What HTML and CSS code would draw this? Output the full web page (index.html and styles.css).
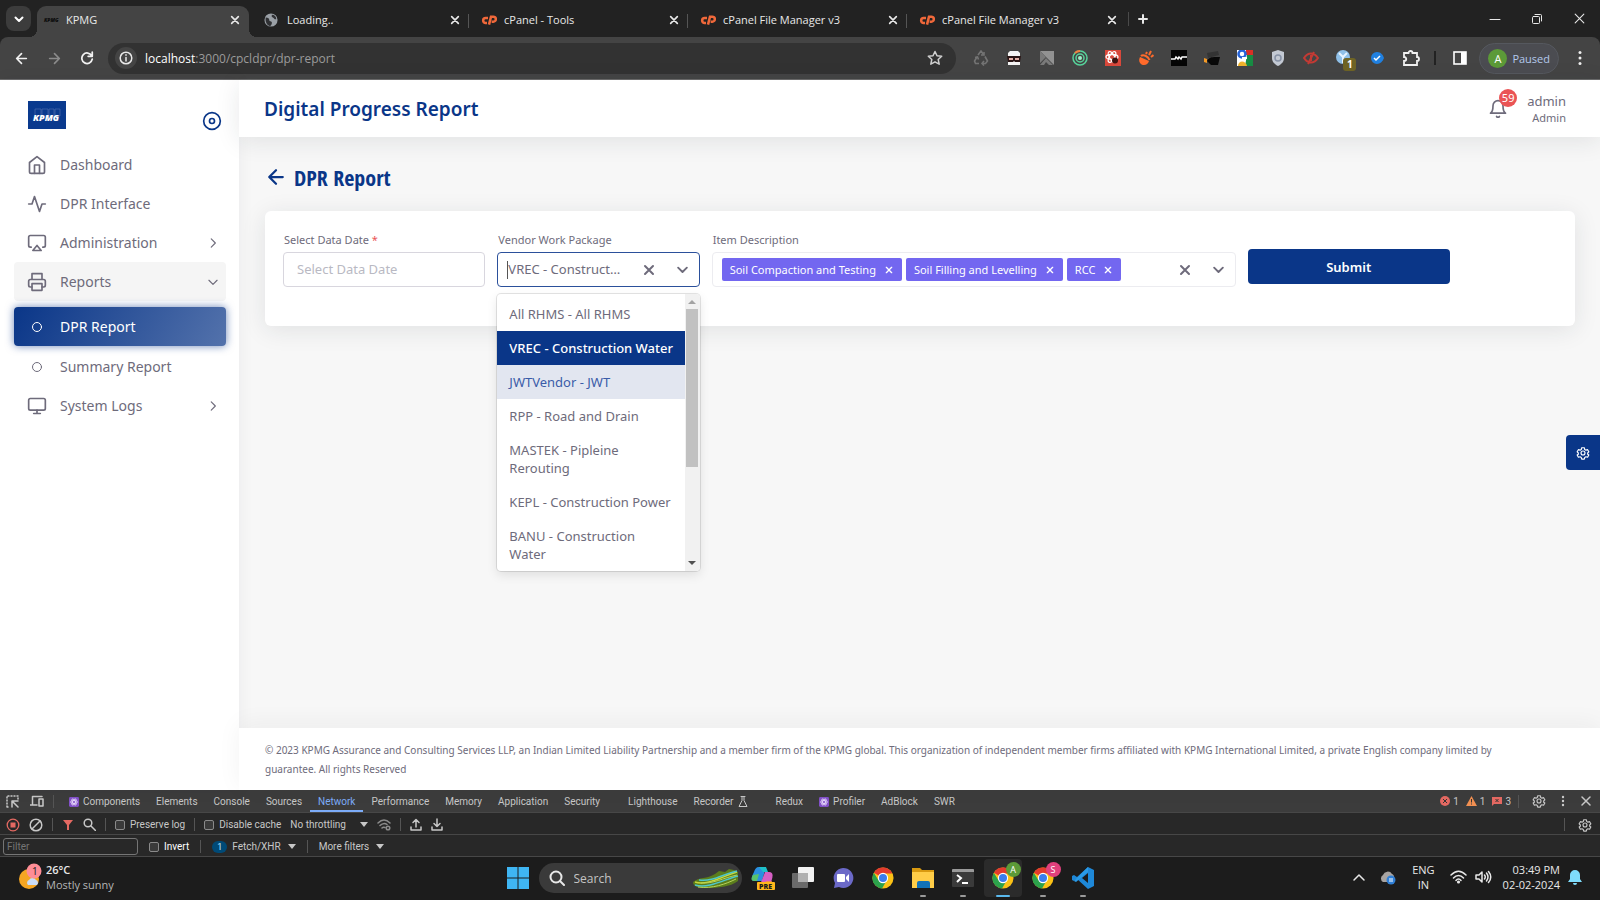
FILE: index.html
```html
<!DOCTYPE html>
<html lang="en">
<head>
<meta charset="utf-8">
<title>KPMG</title>
<link rel="stylesheet" href="styles.css">
</head>
<body>
<svg class="sprite" aria-hidden="true">
  <symbol id="close" viewBox="0 0 12 12"><path d="M2 2l8 8M10 2l-8 8"/></symbol>
  <symbol id="chev-down" viewBox="0 0 24 24"><path d="M5 9l7 7 7-7"/></symbol>
  <symbol id="chev-right" viewBox="0 0 24 24"><path d="M9 5l7 7-7 7"/></symbol>
  <symbol id="arrow-left" viewBox="0 0 24 24"><path d="M21 12H3M12 3l-9 9 9 9"/></symbol>
  <symbol id="gear" viewBox="0 0 24 24"><circle cx="12" cy="12" r="3.4"/><path d="M9.8 3h4.4l.8 3 2 1.1 2.9-.8 2.1 3.7-2 2 0 2 2 1.5-2.1 3.8-2.9-.8-2 1.2-.8 2.8H9.800l-.8-2.800-2-1.200-2.900.8L2 15.500l2-1.500v-2l-2-2 2.100-3.700 2.900.8L9 6z"/></symbol>
  <symbol id="cp" viewBox="0 0 24 16"><path d="M10.500 5H7a3.500 3.500 0 0 0 0 7.500h2M12 15l3-12h3.500a3.500 3.500 0 0 1 0 7.500H16" fill="none" stroke="#f0683a" stroke-width="3.800"/></symbol>
  <symbol id="chrome" viewBox="0 0 24 24"><circle cx="12" cy="12" r="11.500" fill="#fbc116"/><path d="M12 12L2 6.300A11.500 11.500 0 0 1 22 6.500L21.500 7H12z" fill="#e33b2e"/><path d="M12 12L7 14.500 2 6.300a11.500 11.500 0 0 0 9 17.200l5-9z" fill="#2ba24c"/><circle cx="12" cy="12" r="5.600" fill="#fff"/><circle cx="12" cy="12" r="4.400" fill="#3b7ded"/></symbol>
  <symbol id="react" viewBox="0 0 14 14"><rect width="14" height="14" rx="2" fill="#8250c8"/><g fill="none" stroke="#f0e6ff"><ellipse cx="7" cy="7" rx="5" ry="2"/><ellipse cx="7" cy="7" rx="5" ry="2" transform="rotate(60 7 7)"/><ellipse cx="7" cy="7" rx="5" ry="2" transform="rotate(120 7 7)"/></g></symbol>
</svg>

<header class="browser">
  <div class="tabstrip">
    <button class="tab-search" aria-label="Search tabs"><svg class="i line w3" width="12" height="12"><use href="#chev-down"/></svg></button>
    <div class="tab active">
      <span class="favicon kpmg-mini">KPMG</span><span class="tab-title">KPMG</span>
      <button class="tab-close" aria-label="Close tab"><svg class="i line w2" width="10" height="10"><use href="#close"/></svg></button>
    </div>
    <div class="tab">
      <svg class="favicon" width="14" height="14" viewBox="0 0 16 16"><circle cx="8" cy="8" r="7.500" fill="#9aa0a6"/><path d="M2 5c3 0 4 1 4 3s3 1 3 3-1 3-2 4c-3-1-6-4-5-10zM9 2c0 2-1 2 1 3s2 3 4 2c0-3-2-5-5-5z" fill="#303134"/></svg>
      <span class="tab-title">Loading..</span>
      <button class="tab-close" aria-label="Close tab"><svg class="i line w2" width="10" height="10"><use href="#close"/></svg></button>
    </div>
    <div class="tab ruled">
      <svg class="favicon" width="16" height="12"><use href="#cp"/></svg><span class="tab-title">cPanel - Tools</span>
      <button class="tab-close" aria-label="Close tab"><svg class="i line w2" width="10" height="10"><use href="#close"/></svg></button>
    </div>
    <div class="tab ruled">
      <svg class="favicon" width="16" height="12"><use href="#cp"/></svg><span class="tab-title">cPanel File Manager v3</span>
      <button class="tab-close" aria-label="Close tab"><svg class="i line w2" width="10" height="10"><use href="#close"/></svg></button>
    </div>
    <div class="tab ruled">
      <svg class="favicon" width="16" height="12"><use href="#cp"/></svg><span class="tab-title">cPanel File Manager v3</span>
      <button class="tab-close" aria-label="Close tab"><svg class="i line w2" width="10" height="10"><use href="#close"/></svg></button>
    </div>
    <button class="new-tab" aria-label="New tab"><svg class="i line w2" width="12" height="12" viewBox="0 0 12 12"><path d="M6 2v8M2 6h8"/></svg></button>
    <div class="window-controls">
      <button aria-label="Minimize"><svg class="i line thin" width="12" height="12" viewBox="0 0 12 12"><path d="M1 6.500h10"/></svg></button>
      <button aria-label="Restore"><svg class="i line thin" width="12" height="12" viewBox="0 0 12 12"><rect x="1.500" y="3.500" width="7" height="7" rx="1"/><path d="M4 1.500h5.500a1 1 0 0 1 1 1V8"/></svg></button>
      <button aria-label="Close"><svg class="i line thin" width="13" height="13"><use href="#close"/></svg></button>
    </div>
  </div>

  <div class="toolbar">
    <button class="nav" aria-label="Back"><svg class="i line w25" width="13" height="13"><use href="#arrow-left"/></svg></button>
    <button class="nav dim" aria-label="Forward"><svg class="i line w25" width="13" height="13" viewBox="0 0 24 24"><path d="M3 12h18M12 3l9 9-9 9"/></svg></button>
    <button class="nav" aria-label="Reload"><svg class="i line w25" width="14" height="14" viewBox="0 0 24 24"><path d="M20 8a9 9 0 1 0 1 6M21 2v7h-7"/></svg></button>
    <div class="address">
      <span class="site-info"><svg class="i line" width="14" height="14" viewBox="0 0 14 14"><circle cx="7" cy="7" r="5.800"/><path d="M7 6.500v3.500M7 3.800v.4"/></svg></span>
      <span class="url"><b>localhost</b>:3000/cpcldpr/dpr-report</span>
      <button class="star" aria-label="Bookmark"><svg class="i line" width="16" height="16" viewBox="0 0 16 16"><path d="M8 1.500l2 4.300 4.700.5-3.500 3.200 1 4.700L8 11.800l-4.200 2.400 1-4.700L1.300 6.300 6 5.800z"/></svg></button>
    </div>
    <div class="extensions">
      <svg width="16" height="16" viewBox="0 0 16 16"><g fill="none" stroke="#747474" stroke-width="1.600"><path d="M5 5l3-4 2.500 3.500M12 6.500l2.500 4.500-2 2.500H10M6 13.500H2.500L1.500 11 4 7"/><path d="M11 2v3H8M11 11l-2 2.500 2 2M2 7.500L4.500 7l1 2.500"/></g></svg>
      <svg width="16" height="16" viewBox="0 0 16 16"><path d="M4 1h8l2 2v12H2V3z" fill="#f4f4f4"/><path d="M1 6h14l-1 6H9L8 11l-1 1H2z" fill="#2a1616"/><path d="M3 8h4v2H3zM9 8h4v2H9z" fill="#e3b0a8"/></svg>
      <svg width="16" height="16" viewBox="0 0 16 16"><path d="M1 1h14v14z" fill="#929292"/><path d="M1 1l6 6-6 6zM1 15l6-7 7 7h-4l-3-3-2 3z" fill="#7a7a7a"/></svg>
      <svg width="16" height="16" viewBox="0 0 16 16"><g fill="none" stroke="#57d39b" stroke-width="1.500"><circle cx="8" cy="8" r="7"/><circle cx="8" cy="8" r="4"/></g><circle cx="8" cy="8" r="2" fill="#a0f0c8"/><path d="M3 3a7 7 0 0 1 5-2" stroke="#f08040" stroke-width="2" fill="none"/></svg>
      <svg width="16" height="16" viewBox="0 0 16 16"><rect width="16" height="16" fill="#d9483b"/><g fill="none" stroke="#fff" stroke-width="1.300"><ellipse cx="7" cy="7" rx="6" ry="2.500"/><ellipse cx="7" cy="7" rx="6" ry="2.500" transform="rotate(60 7 7)"/><ellipse cx="7" cy="7" rx="6" ry="2.500" transform="rotate(120 7 7)"/></g><circle cx="10" cy="10.500" r="3" fill="#3b1310"/></svg>
      <svg width="16" height="16" viewBox="0 0 16 16"><path d="M2 7l9 4c-1 3-3 4.500-6 4S0 11 2 7z" fill="#ff6a2b"/><path d="M3 6c2-2 7 0 8.500 4M8 4l1-2M11 5l2-4M13 7l2.500-2" stroke="#ff6a2b" stroke-width="2" fill="none"/></svg>
      <svg width="16" height="16" viewBox="0 0 16 16"><rect width="16" height="16" fill="#050505"/><path d="M0 9h4l1-2 2 2 1-2 2 2 1-2h5" stroke="#fff" stroke-width="1.500" fill="none"/></svg>
      <svg width="16" height="16" viewBox="0 0 16 16"><path d="M3 3l11-2 1 4-11 3z" fill="#333"/><path d="M3 11c2-5 8-4 13-4l-2 8H7z" fill="#080808"/><path d="M0 8l3 1v4l-3-1z" fill="#f39a27"/></svg>
      <svg width="16" height="16" viewBox="0 0 16 16"><rect width="16" height="16" fill="#fff"/><path d="M9 0h7v5H9z" fill="#d93025"/><path d="M10 5h6v11H8z" fill="#188c43"/><circle cx="5" cy="4" r="3.500" fill="none" stroke="#2563d8" stroke-width="2.500"/><path d="M1 16c0-6 8-6 9 0z" fill="#f0b32c"/><path d="M5 8h5" stroke="#fff" stroke-width="2"/></svg>
      <svg width="16" height="16" viewBox="0 0 16 16"><path d="M8 0l6 2v6c0 4-3 6.500-6 8-3-1.500-6-4-6-8V2z" fill="#c3c9d3"/><circle cx="8" cy="8" r="3" fill="none" stroke="#8792a6" stroke-width="1.500"/></svg>
      <svg width="16" height="16" viewBox="0 0 16 16"><g fill="none" stroke="#c33a34" stroke-width="2"><path d="M1 8c4-6 10-6 14 0-4 6-10 6-14 0zM11 2L5 14"/><path d="M8 5v6"/></g></svg>
      <span class="ext-badged"><svg width="16" height="16" viewBox="0 0 16 16"><circle cx="7" cy="7" r="7" fill="#8fc0e8"/><path d="M3 3l4 4 4-4M7 7v6" stroke="#e6f3ff" stroke-width="2" fill="none"/></svg><span class="ext-count">1</span></span>
      <svg width="16" height="16" viewBox="0 0 16 16"><path d="M8 2c4 0 6 3 7 6-1 3-4 6-7 6a6 6 0 0 1 0-12z" fill="#2080e0"/><path d="M5 8l2 2 4-4" stroke="#fff" stroke-width="1.500" fill="none"/></svg>
      <svg width="18" height="18" viewBox="0 0 18 18"><path d="M2 4h4.500a2 2 0 1 1 4 0H15v4a2 2 0 1 1 0 4v4H2v-4c3 0 3-4 0-4z" fill="none" stroke="#f1f1f1" stroke-width="1.800"/></svg>
    </div>
    <span class="tool-rule"></span>
    <svg class="side-panel" width="14" height="14" viewBox="0 0 14 14"><rect x="1" y="1" width="12" height="12" fill="none" stroke="#fff" stroke-width="1.600"/><path d="M8 1h5v12H8z" fill="#fff"/></svg>
    <button class="profile"><span class="avatar">A</span>Paused</button>
    <button class="kebab" aria-label="Menu"><svg width="4" height="16" viewBox="0 0 4 16" fill="#eee"><circle cx="2" cy="2.500" r="1.500"/><circle cx="2" cy="8" r="1.500"/><circle cx="2" cy="13.500" r="1.500"/></svg></button>
  </div>
</header>

<div class="app">
  <aside class="sidebar">
    <div class="brand">
      <svg class="logo" width="38" height="28" viewBox="0 0 38 28"><rect width="38" height="28" fill="#0a3a8e"/><path d="M7 8h6v7H7zM14 8h6v7h-6zM21 8h5v7h-5zM27 8h5v7h-5z" fill="none" stroke="#4a6cae" stroke-width=".7"/><text x="5" y="20" class="logo-text">KPMG</text></svg>
      <button class="pin" aria-label="Toggle sidebar"><svg class="i line w2" width="20" height="20" viewBox="0 0 24 24"><circle cx="12" cy="12" r="10"/><circle cx="12" cy="12" r="3"/></svg></button>
    </div>
    <nav class="menu">
      <a href="#" class="item"><svg class="i line w2" width="20" height="20" viewBox="0 0 24 24"><path d="M3 9l9-7 9 7v11a2 2 0 0 1-2 2H5a2 2 0 0 1-2-2z"/><path d="M9 22V12h6v10"/></svg><span>Dashboard</span></a>
      <a href="#" class="item"><svg class="i line w2" width="20" height="20" viewBox="0 0 24 24"><path d="M22 12h-4l-3 9L9 3l-3 9H2"/></svg><span>DPR Interface</span></a>
      <a href="#" class="item"><svg class="i line w2" width="20" height="20" viewBox="0 0 24 24"><path d="M5 17H4a2 2 0 0 1-2-2V5a2 2 0 0 1 2-2h16a2 2 0 0 1 2 2v10a2 2 0 0 1-2 2h-1"/><path d="M12 15l5 6H7z"/></svg><span>Administration</span><svg class="i line w2 arrow" width="14" height="14"><use href="#chev-right"/></svg></a>
      <a href="#" class="item open"><svg class="i line w2" width="20" height="20" viewBox="0 0 24 24"><path d="M6 9V2h12v7M6 18H4a2 2 0 0 1-2-2v-5a2 2 0 0 1 2-2h16a2 2 0 0 1 2 2v5a2 2 0 0 1-2 2h-2"/><path d="M6 14h12v8H6z"/></svg><span>Reports</span><svg class="i line w2 arrow" width="14" height="14"><use href="#chev-down"/></svg></a>
      <a href="#" class="item sub current"><svg class="i line w2" width="12" height="12" viewBox="0 0 24 24"><circle cx="12" cy="12" r="9"/></svg><span>DPR Report</span></a>
      <a href="#" class="item sub"><svg class="i line w2" width="12" height="12" viewBox="0 0 24 24"><circle cx="12" cy="12" r="9"/></svg><span>Summary Report</span></a>
      <a href="#" class="item"><svg class="i line w2" width="20" height="20" viewBox="0 0 24 24"><rect x="2" y="3" width="20" height="14" rx="2"/><path d="M8 21h8M12 17v4"/></svg><span>System Logs</span><svg class="i line w2 arrow" width="14" height="14"><use href="#chev-right"/></svg></a>
    </nav>
  </aside>

  <div class="page">
    <div class="topbar">
      <h1>Digital Progress Report</h1>
      <div class="user">
        <button class="bell" aria-label="Notifications"><svg class="i line w2" width="20" height="20" viewBox="0 0 24 24"><path d="M18 8A6 6 0 0 0 6 8c0 7-3 9-3 9h18s-3-2-3-9M13.700 21a2 2 0 0 1-3.400 0"/></svg><span class="bell-count">59</span></button>
        <div class="who"><span class="user-name">admin</span><span class="user-role">Admin</span></div>
      </div>
    </div>

    <main class="content">
      <h2><a href="#" aria-label="Back"><svg class="i line w25" width="18" height="18"><use href="#arrow-left"/></svg></a>DPR Report</h2>
      <form class="card">
        <div class="field span2">
          <label for="date">Select Data Date <em>*</em></label>
          <input id="date" class="box" type="text" placeholder="Select Data Date">
        </div>
        <div class="field span2">
          <label for="vendor">Vendor Work Package</label>
          <div class="box select focus">
            <span class="caret"></span>
            <input id="vendor" class="value" type="text" role="combobox" aria-expanded="true" aria-controls="vendor-list" value="VREC - Construction Water">
            <button type="button" class="ind" aria-label="Clear"><svg class="i line w2" width="12" height="12"><use href="#close"/></svg></button>
            <button type="button" class="ind" aria-label="Open list"><svg class="i line w25" width="15" height="15"><use href="#chev-down"/></svg></button>
            <div class="dropdown">
              <ul id="vendor-list" class="options" role="listbox">
                <li role="option">All RHMS - All RHMS</li>
                <li role="option" class="selected" aria-selected="true">VREC - Construction Water</li>
                <li role="option" class="hover">JWTVendor - JWT</li>
                <li role="option">RPP - Road and Drain</li>
                <li role="option">MASTEK - Pipleine Rerouting</li>
                <li role="option">KEPL - Construction Power</li>
                <li role="option">BANU - Construction Water</li>
              </ul>
              <div class="scrollbar"><i class="up"></i><i class="thumb"></i><i class="down"></i></div>
            </div>
          </div>
        </div>
        <div class="field span5">
          <label for="items">Item Description</label>
          <div class="box select multi">
            <span class="chip">Soil Compaction and Testing<button type="button" aria-label="Remove Soil Compaction and Testing"><svg class="i line w2" width="8" height="8"><use href="#close"/></svg></button></span>
            <span class="chip">Soil Filling and Levelling<button type="button" aria-label="Remove Soil Filling and Levelling"><svg class="i line w2" width="8" height="8"><use href="#close"/></svg></button></span>
            <span class="chip">RCC<button type="button" aria-label="Remove RCC"><svg class="i line w2" width="8" height="8"><use href="#close"/></svg></button></span>
            <input id="items" class="value" type="text">
            <button type="button" class="ind" aria-label="Clear"><svg class="i line w2" width="12" height="12"><use href="#close"/></svg></button>
            <button type="button" class="ind" aria-label="Open list"><svg class="i line w25" width="15" height="15"><use href="#chev-down"/></svg></button>
          </div>
        </div>
        <div class="field span2 action"><button type="button" class="submit">Submit</button></div>
      </form>
    </main>

    <footer class="footer">© 2023 KPMG Assurance and Consulting Services LLP, an Indian Limited Liability Partnership and a member firm of the KPMG global. This organization of independent member firms affiliated with KPMG International Limited, a private English company limited by guarantee. All rights Reserved</footer>
  </div>
  <button class="customizer" aria-label="Customize"><svg class="i line w2" width="14" height="14"><use href="#gear"/></svg></button>
</div>

<section class="devtools">
  <div class="dt-row dt-tabs">
    <svg class="i line" width="13" height="13" viewBox="0 0 13 13"><path d="M6 6h6M6 6v6M6 6l6 6"/><path d="M1 12V1h11v3M1 12h3" stroke-dasharray="1 2"/></svg>
    <svg class="i line dt-device" width="14" height="12" viewBox="0 0 14 12"><path d="M2.500 9V1.500H12M0 10h7"/><rect x="9" y="4" width="4" height="7"/></svg>
    <span class="dt-rule"></span>
    <button class="first"><svg width="10" height="10"><use href="#react"/></svg>Components</button><button>Elements</button><button>Console</button><button>Sources</button><button class="on">Network</button><button>Performance</button><button>Memory</button><button>Application</button><button>Security</button><button class="late">Lighthouse</button><button>Recorder<svg class="i line thin" width="10" height="11" viewBox="0 0 10 11"><path d="M3 .5h4M4 .5v4l-3 6h8l-3-6v-4"/></svg></button><button class="late">Redux</button><button><svg width="10" height="10"><use href="#react"/></svg>Profiler</button><button>AdBlock</button><button>SWR</button>
    <div class="dt-status">
      <span><svg width="10" height="10" viewBox="0 0 10 10"><circle cx="5" cy="5" r="5" fill="#e46962"/><path d="M3 3l4 4M7 3L3 7" stroke="#333"/></svg>1</span>
      <span><svg width="11" height="10" viewBox="0 0 11 10"><path d="M5.500 0L11 10H0z" fill="#f29052"/><path d="M5.500 3v3.500M5.500 7.500v1" stroke="#333"/></svg>1</span>
      <span><svg width="10" height="10" viewBox="0 0 10 10"><path d="M0 1h10v7H2L0 10z" fill="#e46962"/><path d="M3.500 3l3 3M6.500 3l-3 3" stroke="#333"/></svg>3</span>
      <span class="dt-rule"></span>
      <svg class="i line w2" width="14" height="14"><use href="#gear"/></svg>
      <svg class="dt-more" width="4" height="12" viewBox="0 0 4 12" fill="#ccc"><circle cx="2" cy="2" r="1.200"/><circle cx="2" cy="6" r="1.200"/><circle cx="2" cy="10" r="1.200"/></svg>
      <svg class="i line" width="12" height="12"><use href="#close"/></svg>
    </div>
  </div>
  <div class="dt-row">
    <svg width="14" height="14" viewBox="0 0 14 14"><circle cx="7" cy="7" r="5.800" fill="none" stroke="#e46962" stroke-width="1.300"/><rect x="4.500" y="4.500" width="5" height="5" fill="#e46962"/></svg>
    <svg class="i line" width="14" height="14" viewBox="0 0 14 14"><circle cx="7" cy="7" r="5.800"/><path d="M11 3l-8 8"/></svg>
    <span class="dt-rule"></span>
    <svg width="12" height="12" viewBox="0 0 12 12"><path d="M1 1h10L7 6v5H5V6z" fill="#e46962"/></svg>
    <svg class="i line" width="13" height="13" viewBox="0 0 13 13"><circle cx="5" cy="5" r="3.800"/><path d="M8 8l4.500 4.500"/></svg>
    <span class="dt-rule"></span>
    <label><input type="checkbox">Preserve log</label>
    <span class="dt-rule"></span>
    <label><input type="checkbox">Disable cache</label>
    <button class="drop throttle">No throttling<i></i></button>
    <svg class="i line dim" width="14" height="12" viewBox="0 0 14 12"><path d="M1 4c4-4 8-4 12 0M3 6.500c2-2 5-2.500 7-1M5 9c1-1 2-1 3-.5"/><circle cx="11" cy="9" r="1.800"/></svg>
    <span class="dt-rule"></span>
    <svg class="i line" width="12" height="13" viewBox="0 0 12 13"><path d="M6 9V1.500M3 4.500l3-3 3 3M1 9v3h10V9"/></svg>
    <svg class="i line" width="12" height="13" viewBox="0 0 12 13"><path d="M6 1v7.500M3 5.500l3 3 3-3M1 9v3h10V9"/></svg>
    <div class="dt-status"><span class="dt-rule"></span><svg class="i line w2" width="14" height="14"><use href="#gear"/></svg></div>
  </div>
  <div class="dt-row dt-filter">
    <input class="filter" type="text" placeholder="Filter" aria-label="Filter">
    <label class="bright"><input type="checkbox">Invert</label>
    <span class="dt-rule"></span>
    <button class="drop"><span class="pill">1</span>Fetch/XHR<i></i></button>
    <span class="dt-rule"></span>
    <button class="drop">More filters<i></i></button>
  </div>
</section>

<footer class="taskbar">
  <div class="weather">
    <svg width="26" height="28" viewBox="0 0 26 28"><circle cx="11" cy="16" r="10" fill="#f5a623"/><path d="M10 22a3 3 0 0 1 1-5 4 4 0 0 1 7 0 3 3 0 0 1 1 5z" fill="#c9dcf7"/><circle cx="16" cy="8" r="7.500" fill="#ff8d96"/><text x="14" y="12" class="weather-count">1</text></svg>
    <div><strong>26°C</strong><span>Mostly sunny</span></div>
  </div>
  <div class="dock">
    <button class="app-icon start" aria-label="Start"><svg width="22" height="22" viewBox="0 0 22 22"><path d="M0 0h10.500v10.500H0zM11.500 0H22v10.500H11.500zM0 11.500h10.500V22H0zM11.500 11.500H22V22H11.500z" fill="#3fb6f4"/></svg></button>
    <label class="search">
      <svg class="i line w2" width="16" height="16" viewBox="0 0 16 16"><circle cx="7" cy="7" r="5.500"/><path d="M11 11l4 4"/></svg>
      <input type="text" placeholder="Search">
      <svg width="46" height="22" viewBox="0 0 46 22"><path d="M0 15c6-5 14-3 22-8l4-3 6 1 4-3 5 1 4 2v9c-8 6-20 7-32 7C6 21 0 20 0 15z" fill="#5b7d1c"/><path d="M2 15c12 4 28-6 42-10" stroke="#c8d83a" stroke-width="1.500" fill="none"/><path d="M2 18c14 4 30-6 43-9M6 13c14 2 24-6 38-9" stroke="#4fc6c9" stroke-width="1.500" fill="none"/><path d="M5 20c14 2 28-3 38-8M8 16c12 1 22-5 36-8" stroke="#b7d45a" fill="none"/></svg>
    </label>
    <button class="app-icon" aria-label="Copilot"><svg width="24" height="24" viewBox="0 0 24 24"><path d="M8 1h7l-4 14H3c-4 0-2-5 0-9 1-3 2-5 5-5z" fill="#2a8fe0"/><path d="M8 1h7l2 5h-5z" fill="#1ec0c8"/><path d="M2 9l6-1-2 7H3c-3 0-3-3-1-6z" fill="#59c36a"/><path d="M14 6h4c4 0 4 3 3 7s-2 6-6 6H9z" fill="#d65fc4"/><path d="M15 15h6l-2 4h-6z" fill="#f08a5a"/><rect x="6" y="16" width="18" height="8" rx="1" fill="#ffb81c"/><text x="8" y="23" class="pre">PRE</text></svg></button>
    <button class="app-icon" aria-label="Task view"><svg width="22" height="22" viewBox="0 0 22 22"><rect y="6" width="16" height="15" rx="1" fill="#6a6a6a"/><rect x="6" y="0" width="16" height="15" rx="1" fill="#f2f2f2"/><path d="M6 6h10v9H6z" fill="#b0b0b0"/></svg></button>
    <button class="app-icon" aria-label="Chat"><svg width="22" height="22" viewBox="0 0 22 22"><path d="M11 1a10 10 0 1 1-4 19l-5 1 1-5A10 10 0 0 1 11 1z" fill="#6b69c8"/><rect x="5" y="7" width="8" height="8" rx="1" fill="#fff"/><path d="M14 10l3-3v8l-3-3z" fill="#fff"/></svg></button>
    <button class="app-icon" aria-label="Chrome"><svg width="22" height="22"><use href="#chrome"/></svg></button>
    <button class="app-icon run" aria-label="Explorer"><svg width="22" height="22" viewBox="0 0 22 22"><path d="M0 1h8l2 2h12v18H0z" fill="#d99a10"/><path d="M0 5h22v16H0z" fill="#ffcd48"/><path d="M5 21v-5a2 2 0 0 1 2-2h9a2 2 0 0 1 2 2v5z" fill="#1272b8"/></svg></button>
    <button class="app-icon run" aria-label="Terminal"><svg width="22" height="18" viewBox="0 0 22 18"><rect width="22" height="18" rx="1" fill="#3a3a3a"/><path d="M0 1a1 1 0 0 1 1-1h20a1 1 0 0 1 1 1v2H0z" fill="#9a9a9a"/><path d="M5 6l4 3-4 4M10 14h6" stroke="#fff" stroke-width="2" fill="none"/></svg></button>
    <button class="app-icon run now" aria-label="Chrome, profile A"><svg width="22" height="22"><use href="#chrome"/></svg><span class="dot-a">A</span></button>
    <button class="app-icon run" aria-label="Chrome, profile S"><svg width="22" height="22"><use href="#chrome"/></svg><span class="dot-a pink">S</span></button>
    <button class="app-icon run" aria-label="VS Code"><svg width="22" height="22" viewBox="0 0 22 22"><path d="M16 0l6 3v16l-6 3L5 12l-3 2-2-1v-4l2-1 3 2z" fill="#1e88d8"/><path d="M16 6v10l-6-5z" fill="#1c1c1c"/><path d="M2 14L16 0v5L4 15z" fill="#2a9be8"/></svg></button>
  </div>
  <div class="tray">
    <svg class="i line" width="14" height="10" viewBox="0 0 14 10"><path d="M2 8l5-5 5 5"/></svg>
    <svg class="cloud" width="18" height="16" viewBox="0 0 18 16"><path d="M4 13a4 4 0 0 1 0-7 5 5 0 0 1 9-1c3 1 3 7 0 8z" fill="#a7a3a1"/><circle cx="12" cy="11" r="4.500" fill="#2f7fd6"/><path d="M10 10h4M10 12h4" stroke="#fff"/></svg>
    <div class="lang">ENG<br>IN</div>
    <svg class="i line" width="17" height="14" viewBox="0 0 17 14"><path d="M1 5c5-5 10-5 15 0M3.500 8c3-3.500 7-3.500 10 0M6 10.500c1.500-2 3.500-2 5 0"/><circle cx="8.500" cy="12" r=".8"/></svg>
    <svg class="i line" width="17" height="14" viewBox="0 0 17 14"><path d="M1 5h3l3-3v10L4 9H1zM9.500 5q1.500 2 0 4M11.500 3q3 4 0 8M13.500 1.500q4.500 5.500 0 11"/></svg>
    <div class="clock">03:49 PM<br>02-02-2024</div>
    <svg width="14" height="16" viewBox="0 0 14 16"><path d="M7 1a5 5 0 0 1 5 5v4l2 3H0l2-3V6a5 5 0 0 1 5-5zM5 14h4a2 2 0 0 1-4 0z" fill="#7fdcfb"/></svg>
  </div>
</footer>
</body>
</html>
```

FILE: styles.css
```css
* { box-sizing: border-box; }

body {
  margin: 0;
  min-height: 100vh;
  display: flex;
  flex-direction: column;
  font-family: "Noto Sans", "Open Sans", sans-serif;
  font-size: 13px;
  color: #6e6b7b;
  background: #f7f7f7;
}

button {
  font: inherit;
  color: inherit;
  background: none;
  border: 0;
  padding: 0;
  display: inline-flex;
  align-items: center;
  justify-content: center;
}

input { font: inherit; color: inherit; min-width: 0; }
a { color: inherit; text-decoration: none; }
svg { flex: none; display: block; }

.sprite { position: absolute; width: 0; height: 0; }
.line { fill: none; stroke: currentColor; stroke-width: 1.5; stroke-linecap: round; stroke-linejoin: round; }
.thin { stroke-width: 1; }
.w2 { stroke-width: 2; }
.w25 { stroke-width: 3; }
.w3 { stroke-width: 4; }

/* Browser window */
.browser, .taskbar { font-family: "Open Sans", "Noto Sans", sans-serif; }
.browser { background: #222; color: #e8e8e8; }

.tabstrip { display: flex; align-items: center; height: 37px; padding-left: 6px; }
.tab-search { width: 25px; height: 25px; border-radius: 8px; background: #3c3c3c; margin-right: 6px; color: #fff; }
.tab {
  position: relative;
  display: flex;
  align-items: center;
  gap: 9px;
  flex: 0 1 219px;
  height: 31px;
  align-self: flex-end;
  padding: 0 8px 4px 15px;
  font-size: 11px;
}
.tab.active { background: #444; border-radius: 9px 9px 0 0; flex-basis: 212px; padding: 0 9px 4px 7px; gap: 8px; }
.tab.active::before, .tab.active::after { content: ""; position: absolute; bottom: 0; width: 8px; height: 8px; }
.tab.active::before { right: 100%; background: radial-gradient(circle at 0 0, transparent 8px, #444 8px); }
.tab.active::after { left: 100%; background: radial-gradient(circle at 100% 0, transparent 8px, #444 8px); }
.tab.ruled { padding-left: 13px; background: linear-gradient(#555, #555) 0 8px / 1px 14px no-repeat; }
.tab-title { flex: 1; white-space: nowrap; }
.tab.ruled .tab-title { margin-left: -2px; }
.kpmg-mini { font-size: 5px; font-weight: 800; font-style: italic; color: #0b0b0b; width: 14px; }
.new-tab { width: 28px; height: 14px; margin-left: 3px; border-left: 1px solid #4a4a4a; }
.window-controls { display: flex; margin-left: auto; }
.window-controls button { width: 42px; height: 30px; }

.toolbar {
  display: flex;
  align-items: center;
  height: 43px;
  padding: 0 18px 0 6px;
  background: #444;
  border-bottom: 1px solid #6b6b6b;
  border-radius: 8px 8px 0 0;
}
.nav { width: 30px; height: 30px; margin-right: 3px; color: #f1f1f1; }
.nav.dim, .dim { color: #8b8b8b; }
.address {
  flex: 1;
  display: flex;
  align-items: center;
  gap: 8px;
  height: 31px;
  margin-left: 3px;
  padding: 0 13px 0 7px;
  border-radius: 16px;
  background: #323232;
}
.site-info { width: 22px; height: 22px; border-radius: 50%; background: #444; display: flex; align-items: center; justify-content: center; }
.url { flex: 1; font-size: 12px; color: #9b9b9b; }
.url b { font-weight: 400; color: #fff; }
.star { color: #d0d0d0; }
.extensions { display: flex; align-items: center; gap: 17px; margin-left: 17px; }
.ext-badged { position: relative; }
.ext-count {
  position: absolute; left: 7px; top: 8px;
  width: 13px; height: 13px; border-radius: 3px;
  background: #6f6425; color: #fff;
  font-size: 10px; font-weight: 700; line-height: 13px; text-align: center;
}
.tool-rule { width: 2px; height: 14px; background: #222; margin: 0 17px 0 14px; }
.side-panel { margin-right: 12px; }
.profile { gap: 5px; height: 31px; padding: 0 8px; border-radius: 16px; border: 1px solid #55585e; background: #4b4c51; color: #b3c9ec; font-size: 11px; }
.avatar { width: 19px; height: 19px; border-radius: 50%; background: #5c9a38; color: #fff; line-height: 19px; }
.kebab { margin-left: 19px; }

/* Application */
.app { flex: 1; display: flex; position: relative; }
.sidebar { width: 239px; flex: none; background: #fff; box-shadow: 0 0 15px rgba(34, 41, 47, .06); }
.brand { display: flex; justify-content: space-between; padding: 21px 17px 0 28px; height: 65px; }
.logo-text { font: italic 800 9px "Open Sans", sans-serif; fill: #fff; }
.pin { color: #0a3688; height: 40px; }
.menu { padding: 0 13px 0 14px; }
.item { display: flex; align-items: center; gap: 13px; height: 39px; padding: 0 6px 0 13px; border-radius: 4px; font-size: 14px; }
.item .arrow { margin-left: auto; }
.item.open { background: #f5f5f5; }
.item.sub { gap: 17px; padding-left: 17px; }
.item.current { margin: 6px 0 1px; color: #fff; background: linear-gradient(118deg, #0a3688, rgba(10, 54, 136, .7)); box-shadow: 0 0 8px rgba(10, 54, 136, .6); }

.page { flex: 1; min-width: 0; display: flex; flex-direction: column; }
.topbar { display: flex; align-items: center; justify-content: space-between; height: 57px; padding: 0 34px 0 25px; background: #fff; box-shadow: 0 4px 24px rgba(34, 41, 47, .1); }
h1 { margin: 0; font-size: 19px; font-weight: 600; color: #0a3688; }
.user { display: flex; align-items: center; gap: 19px; }
.bell { position: relative; }
.bell-count { position: absolute; left: 11px; top: -10px; width: 18px; height: 18px; border-radius: 50%; background: #ea5455; color: #fff; font-size: 11px; line-height: 18px; }
.who { display: flex; flex-direction: column; align-items: flex-end; }
.user-name { font-size: 13px; line-height: 18px; }
.user-role { font-size: 11px; line-height: 16px; }

.content { flex: 1; padding: 25px 25px 0 26px; }
h2 { display: flex; align-items: center; gap: 9px; margin: 0 0 19px; padding-left: 2px; height: 30px; font: 700 22px "Open Sans Condensed", "Noto Sans Condensed", "Liberation Sans Narrow", "Open Sans", sans-serif; color: #0a3688; }
.card {
  display: grid;
  grid-template-columns: repeat(12, minmax(0, 1fr));
  min-height: 115px;
  padding: 20px 12px;
  border-radius: 6px;
  background: #fff;
  box-shadow: 0 4px 24px rgba(34, 41, 47, .1);
}
.field { padding: 0 6px; }
.span2 { grid-column: span 2; }
.span5 { grid-column: span 5; }
.field label { display: block; margin-bottom: 3px; padding-left: 1px; font-size: 11px; line-height: 18px; }
.field em { font-style: normal; color: #ea5455; }
.box { display: flex; align-items: center; width: 100%; height: 35px; border: 1px solid #d8d6de; border-radius: 4px; background: #fff; font-size: 13px; }
input.box { padding: 0 13px 1px; }
.box::placeholder { color: #b9b9c3; }
.select { position: relative; padding-left: 9px; }
.select.focus { border-color: #2b509b; }
.select .value { flex: 1; border: 0; outline: 0; padding: 0 0 1px; margin-right: 12px; background: none; text-overflow: ellipsis; height: 24px; }
.caret { width: 1px; height: 18px; background: #555; }
.ind { width: 33px; height: 24px; }
.multi { border-color: #ececf0; }
.chip { display: inline-flex; align-items: center; height: 23px; margin-right: 4px; padding-left: 8px; border-radius: 2px; background: #7367f0; color: #fff; font-size: 11px; white-space: nowrap; }
.chip button { width: 26px; height: 23px; }
.action { padding-top: 18px; }
.submit { width: 100%; height: 35px; border-radius: 4px; background: #0a3688; color: #fff; font-size: 13px; font-weight: 600; }

.dropdown { position: absolute; left: -1px; right: -1px; top: 41px; z-index: 2; display: flex; border-radius: 4px; background: #fff; box-shadow: 0 0 0 1px rgba(0, 0, 0, .1), 0 4px 11px rgba(0, 0, 0, .1); overflow: hidden; }
.options { flex: 1; min-width: 0; margin: 0; padding: 3px 0 0; list-style: none; }
.options li { padding: 8px 12px; line-height: 18px; font-size: 13px; }
.options .selected { background: #0a3688; color: #fff; font-weight: 500; white-space: nowrap; }
.options .hover { background: #e2e6f0; color: #3a5ca8; }
.scrollbar { flex: none; width: 15px; display: flex; flex-direction: column; align-items: center; background: #f1f1f1; padding: 6px 0; }
.scrollbar i { width: 0; border: 4px solid transparent; }
.scrollbar .up { border-top: 0; border-bottom: 4px solid #a3a3a3; }
.scrollbar .down { margin-top: auto; border-bottom: 0; border-top: 4px solid #505050; }
.scrollbar .thumb { width: 12px; height: 158px; margin-top: 5px; border: 0; background: #c1c1c1; }

.footer { padding: 13px 60px 11px 26px; background: #fff; font-size: 10px; line-height: 19px; box-shadow: 0 -4px 24px rgba(34, 41, 47, .05); }
.customizer { position: absolute; right: 0; top: 355px; width: 34px; height: 35px; border-radius: 4px 0 0 4px; background: #0a3688; color: #fff; }

/* Developer tools */
.devtools { background: #282828; color: #c7c7c7; font-family: Roboto, "Open Sans", sans-serif; font-size: 10px; }
.dt-row { display: flex; align-items: center; gap: 9px; height: 22px; padding: 2px 8px 0 6px; border-bottom: 1px solid #474747; white-space: nowrap; }
.dt-tabs { height: 23px; padding-top: 0; background: #3c3c3c; gap: 0; }
.dt-tabs > button { height: 22px; padding: 1px 8px 0; gap: 4px; }
.dt-tabs > button.first { margin-left: 7px; }
.dt-tabs > button.late { padding-left: 20px; }
.dt-tabs > button.on { color: #7cacf8; box-shadow: inset 0 -2px #7cacf8; }
.dt-device { margin: 0 9px 0 11px; }
.dt-more { margin: 0 8px; }
.dt-rule { width: 1px; height: 13px; background: #555; }
.dt-status { display: flex; align-items: center; gap: 7px; margin-left: auto; }
.dt-status span { display: flex; align-items: center; gap: 3px; }
.dt-status .dt-rule { margin-right: 6px; }
.dt-row label { display: flex; align-items: center; gap: 5px; }
.dt-row input[type="checkbox"] { appearance: none; width: 10px; height: 10px; margin: 0; border: 1px solid #8a8a8a; border-radius: 2px; background: #3a3a3a; }
.bright { color: #fff; }
.drop i { border: 4px solid transparent; border-top: 5px solid #c7c7c7; border-bottom: 0; margin-left: 7px; }
.throttle i { margin-left: 14px; }
.dt-filter { padding-left: 3px; gap: 11px; }
.filter { width: 135px; height: 17px; padding: 0 3px; border: 1px solid #757575; border-radius: 3px; background: #282828; }
.pill { width: 15px; height: 12px; border-radius: 6px; background: #004a77; color: #c2e7ff; font-size: 9px; line-height: 12px; margin-right: 5px; }

/* Taskbar */
.taskbar { display: grid; grid-template-columns: 1fr auto 1fr; align-items: center; height: 43px; padding-bottom: 1px; background: #1c1c1c; color: #e8e8e8; font-size: 11px; }
.weather { display: flex; align-items: center; gap: 2px; padding: 0 0 2px 18px; }
.weather div { display: flex; flex-direction: column; line-height: 15px; }
.weather strong { font-weight: 600; }
.weather span { color: #b5b5b5; }
.weather-count { font: 10px "Open Sans", sans-serif; fill: #222; }
.dock { display: flex; align-items: center; gap: 2px; }
.app-icon { position: relative; width: 38px; height: 38px; border-radius: 4px; }
.app-icon.now { background: #2b2b2b; }
.run::after { content: ""; position: absolute; left: 16px; bottom: 0; width: 6px; height: 2px; border-radius: 1px; background: #9a9a9a; }
.run.now::after { left: 12px; width: 14px; background: #5ab9ee; }
.search { display: flex; align-items: center; gap: 9px; width: 203px; height: 30px; padding: 0 3px 0 10px; border-radius: 15px; background: #3a3a3a; font-size: 12px; }
.search input { flex: 1; border: 0; padding: 0; background: none; }
.search input::placeholder { color: #c4c4c4; }
.pre { font: 800 7px "Open Sans", sans-serif; fill: #1c1c1c; }
.dot-a { position: absolute; right: 1px; top: 3px; width: 15px; height: 15px; border-radius: 50%; background: #5c9a38; color: #fff; font-size: 9px; line-height: 15px; }
.dot-a.pink { background: #e0407c; }
.tray { display: flex; align-items: center; justify-content: flex-end; gap: 8px; padding: 0 18px 2px 0; line-height: 15px; }
.cloud { margin-left: 5px; }
.lang { text-align: center; margin: 0 7px; }
.clock { text-align: right; margin-left: 3px; }
```
